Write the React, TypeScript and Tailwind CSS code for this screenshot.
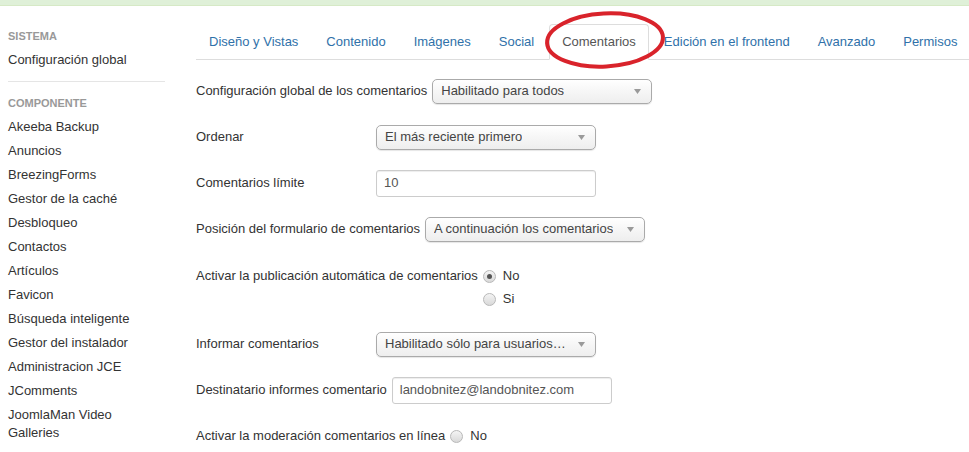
import React from 'react';

const sidebarItems = [
  'Akeeba Backup',
  'Anuncios',
  'BreezingForms',
  'Gestor de la caché',
  'Desbloqueo',
  'Contactos',
  'Artículos',
  'Favicon',
  'Búsqueda inteligente',
  'Gestor del instalador',
  'Administracion JCE',
  'JComments',
  'JoomlaMan Video Galleries',
  'Actualizador de extensiones',
];

const tabs = [
  'Diseño y Vistas',
  'Contenido',
  'Imágenes',
  'Social',
  'Comentarios',
  'Edición en el frontend',
  'Avanzado',
  'Permisos',
];

const Select = ({ value, width = 'w-[220px]' }: { value: string; width?: string }) => (
  <div
    className={`${width} flex h-[25px] items-center justify-between rounded-[5px] border border-[#aaa] bg-linear-to-b from-white via-[#f6f6f6] to-[#eee] pl-[8px] pr-[10px] text-[#444] shadow-[0_1px_1px_rgba(0,0,0,0.1)]`}
  >
    <span className="truncate">{value}</span>
    <svg width="7" height="5" viewBox="0 0 7 5" className="ml-2 shrink-0">
      <polygon points="0,0 7,0 3.5,5" fill="#9a9a9a" />
    </svg>
  </div>
);

const TextInput = ({ value }: { value: string }) => (
  <div className="flex h-[27px] w-[220px] items-center rounded-[3px] border border-[#ccc] px-[7px] text-[#555] shadow-[inset_0_1px_1px_rgba(0,0,0,0.075)]">
    {value}
  </div>
);

const Radio = ({ checked, label }: { checked?: boolean; label: string }) => (
  <div className="flex items-center leading-[18px]">
    <span className="mr-[7px] flex h-[13px] w-[13px] items-center justify-center rounded-full border border-[#b8b8b8] bg-linear-to-b from-[#f4f4f4] to-[#d9d9d9]">
      {checked && <span className="h-[5px] w-[5px] rounded-full bg-[#555]" />}
    </span>
    <span>{label}</span>
  </div>
);

const Row = ({ label, children }: { label: string; children: React.ReactNode }) => (
  <div className="mb-[18px] flex min-h-[28px] items-center">
    <div className="min-w-[180px] shrink-0 pr-[5px]">{label}</div>
    {children}
  </div>
);

export default function App() {
  return (
    <div
      className="relative h-[452px] w-[969px] overflow-hidden bg-white text-[13px] text-[#333]"
      style={{ fontFamily: '"Liberation Sans", Arial, sans-serif' }}
    >
      <div className="h-[6px] border-b border-[#d6e9c6] bg-[#dff0d8]" />

      <div className="flex">
        <aside className="ml-[8px] w-[157px] shrink-0 pt-[22px]">
          <div className="text-[11px] font-bold uppercase leading-[16px] text-[#999]">Sistema</div>
          <div className="mt-[7px] leading-[18px]">Configuración global</div>
          <div className="mt-[12px] h-px bg-[#e5e5e5]" />
          <div className="mt-[13px] text-[11px] font-bold uppercase leading-[16px] text-[#999]">
            Componente
          </div>
          <ul className="mt-[4px] pr-[6px]">
            {sidebarItems.map((item) => (
              <li key={item} className="py-[3px] leading-[18px]">
                {item}
              </li>
            ))}
          </ul>
        </aside>

        <main className="ml-[31px] flex-1 pt-[18px]">
          <ul className="flex border-b border-[#ddd]">
            {tabs.map((tab) => {
              const active = tab === 'Comentarios';
              return (
                <li key={tab} className="-mb-px mr-[2px]">
                  <span
                    className={`block whitespace-nowrap rounded-t-[4px] border px-[12px] py-[8px] leading-[18px] ${
                      active
                        ? 'border-[#ddd] border-b-white bg-white text-[#555]'
                        : 'border-transparent text-[#3071a9]'
                    }`}
                  >
                    {tab}
                  </span>
                </li>
              );
            })}
          </ul>

          <div className="mt-[17px]">
            <Row label="Configuración global de los comentarios">
              <Select value="Habilitado para todos" />
            </Row>
            <Row label="Ordenar">
              <Select value="El más reciente primero" />
            </Row>
            <Row label="Comentarios límite">
              <TextInput value="10" />
            </Row>
            <Row label="Posición del formulario de comentarios">
              <Select value="A continuación los comentarios" />
            </Row>

            <div className="mb-[18px] flex items-start">
              <div className="min-w-[180px] shrink-0 pr-[5px] pt-[6px] leading-[18px]">
                Activar la publicación automática de comentarios
              </div>
              <div className="flex flex-col gap-[5px] pb-[4px] pt-[6px]">
                <Radio checked label="No" />
                <Radio label="Si" />
              </div>
            </div>

            <Row label="Informar comentarios">
              <Select value="Habilitado sólo para usuarios…" />
            </Row>
            <Row label="Destinatario informes comentario">
              <TextInput value="landobnitez@landobnitez.com" />
            </Row>
            <Row label="Activar la moderación comentarios en línea">
              <Radio label="No" />
            </Row>
          </div>
        </main>
      </div>

      <svg
        className="pointer-events-none absolute left-0 top-0"
        width="969"
        height="452"
        viewBox="0 0 969 452"
      >
        <ellipse
          cx="605"
          cy="40"
          rx="58"
          ry="26.5"
          fill="none"
          stroke="#d9232b"
          strokeWidth="4"
          transform="rotate(-3 605 40)"
        />
      </svg>
    </div>
  );
}
